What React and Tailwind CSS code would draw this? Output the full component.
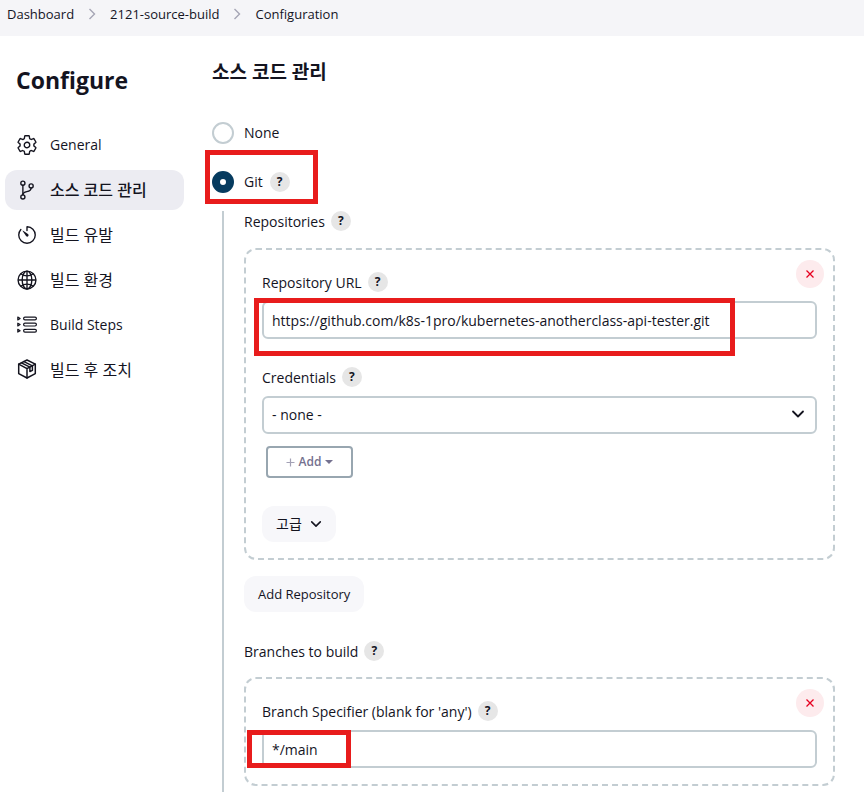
import React from "react";
import {
  IoSettingsOutline,
  IoGitBranchOutline,
  IoTimerOutline,
  IoGlobeOutline,
} from "react-icons/io5";

function StepsIcon({ className }) {
  return (
    <svg viewBox="-1 -1 22 22" fill="none" stroke="currentColor" strokeWidth="1.2" className={className} aria-hidden="true">
      {[3.5, 9.6, 15.7].map((y) => (
        <g key={y}>
          <path d={`M0.8 ${y - 1.4}v2.8l2.3 -1.4z`} strokeLinejoin="round" />
          <rect x="6.6" y={y - 1.4} width="12.8" height="2.8" rx="1.4" />
        </g>
      ))}
    </svg>
  );
}

function PackageIcon({ className }) {
  return (
    <svg
      viewBox="-1 0 22 22"
      fill="none"
      stroke="currentColor"
      strokeWidth="1.5"
      strokeLinejoin="round"
      strokeLinecap="round"
      className={className}
      aria-hidden="true"
    >
      <path d="M10 1L18.3 5.2V14.6L10 19L1.7 14.6V5.2Z" />
      <path d="M1.7 5.2L10 9.6L18.3 5.2M10 9.6V19" />
      <path d="M4.4 3.9L12.9 8.2V12.6L15.4 11.3V6.8L7 2.6" />
    </svg>
  );
}

function Chevron({ className }) {
  return (
    <svg
      viewBox="0 0 14 14"
      fill="none"
      stroke="currentColor"
      strokeWidth="1.8"
      strokeLinecap="round"
      strokeLinejoin="round"
      className={className}
      aria-hidden="true"
    >
      <path d="M2 4.5L7 9.5L12 4.5" />
    </svg>
  );
}

function Help({ topic }) {
  return (
    <button
      type="button"
      aria-label={`Help: ${topic}`}
      className="flex size-5 shrink-0 items-center justify-center rounded-full bg-[#e6e6e6] text-xs leading-5 font-bold"
    >
      ?
    </button>
  );
}

function FieldLabel({ htmlFor, children }) {
  return (
    <div className="flex h-5 items-center gap-1.5">
      <label htmlFor={htmlFor} className="pt-0.5">
        {children}
      </label>
      <Help topic={children} />
    </div>
  );
}

function Panel({ children, className }) {
  return (
    <div className={`relative rounded-xl border-2 border-dashed border-[#c3cdd2] px-4 ${className}`}>
      <button
        type="button"
        aria-label="Delete"
        className="absolute top-2.5 right-[9px] flex size-7 items-center justify-center rounded-full bg-[#fdebed] text-[#e6001f]"
      >
        <svg viewBox="0 0 8 8" stroke="currentColor" strokeWidth="1.3" className="size-2" aria-hidden="true">
          <path d="M0.5 0.5L7.5 7.5M7.5 0.5L0.5 7.5" />
        </svg>
      </button>
      {children}
    </div>
  );
}

const NAV = [
  { label: "General", Icon: IoSettingsOutline, size: "text-sm" },
  { label: "소스 코드 관리", Icon: IoGitBranchOutline, size: "text-base", active: true },
  { label: "빌드 유발", Icon: IoTimerOutline, size: "text-base" },
  { label: "빌드 환경", Icon: IoGlobeOutline, size: "text-base" },
  { label: "Build Steps", Icon: StepsIcon, size: "text-sm" },
  { label: "빌드 후 조치", Icon: PackageIcon, size: "text-base" },
];

const CRUMBS = ["Dashboard", "2121-source-build", "Configuration"];

const FIELD = "h-[38px] w-full rounded-md border-2 border-[#c3cdd2] bg-white px-2 outline-none";
const MARK = "pointer-events-none absolute border-[5px] border-[#e81c1c]";

export default function App() {
  return (
    <div className="flex min-h-screen flex-col bg-white font-['Open_Sans','Noto_Sans_CJK_KR',sans-serif] text-sm text-[#14141f]">
      <nav aria-label="Breadcrumb" className="h-9 bg-[#f5f5f8] px-[7px] pt-1">
        <ol className="flex items-center text-[13px] leading-5">
          {CRUMBS.map((crumb, i) => (
            <li key={crumb} className="flex items-center">
              {i > 0 && (
                <svg viewBox="0 0 8 12" fill="none" stroke="#a5a5b5" strokeWidth="1.4" className="mx-3.5 h-3 w-2" aria-hidden="true">
                  <path d="M1.5 1L6.5 6L1.5 11" />
                </svg>
              )}
              <a href="#">{crumb}</a>
            </li>
          ))}
        </ol>
      </nav>

      <div className="flex flex-1">
        <aside className="w-[184px] shrink-0 pl-[5px]">
          <h1 className="mt-7 mb-[29px] pl-[11px] text-[23px] leading-8 font-bold">Configure</h1>
          <ul className="flex flex-col gap-[5px]">
            {NAV.map(({ label, Icon, size, active }) => (
              <li key={label}>
                <a
                  href="#"
                  className={`flex h-10 items-center gap-3 rounded-xl px-[11px] ${size} ${active ? "bg-[#ececf2] font-medium" : ""}`}
                >
                  <Icon className="size-[22px] shrink-0" />
                  {label}
                </a>
              </li>
            ))}
          </ul>
        </aside>

        <main className="flex min-w-0 flex-1 flex-col pr-[29px] pl-7">
          <h2 className="mt-6 text-[19px] leading-6 font-bold">소스 코드 관리</h2>

          <div className="mt-[38px] flex h-[22px] items-center gap-[10px]">
            <input
              type="radio"
              name="scm"
              id="scm-none"
              className="size-[22px] appearance-none rounded-full border-2 border-[#c3cdd2]"
            />
            <label htmlFor="scm-none">None</label>
          </div>

          <div className="relative mt-[27px] flex h-[22px] items-center gap-[10px]">
            <input
              type="radio"
              name="scm"
              id="scm-git"
              defaultChecked
              className="size-[22px] appearance-none rounded-full border-8 border-[#063b5f] bg-white"
            />
            <div className="flex items-center gap-[7px]">
              <label htmlFor="scm-git">Git</label>
              <Help topic="Git" />
            </div>
            <span className={`${MARK} -top-[21px] -left-[7px] h-[54px] w-[113px]`} />
          </div>

          <section className="mt-[18px] ml-[10px] flex-1 border-l-2 border-[#c3cdd2] pl-5">
            <FieldLabel>Repositories</FieldLabel>

            <Panel className="mt-[17px] pt-[22px] pb-4">
              <FieldLabel htmlFor="repo-url">Repository URL</FieldLabel>
              <div className="relative mt-[9px]">
                <input
                  id="repo-url"
                  type="text"
                  defaultValue="https://github.com/k8s-1pro/kubernetes-anotherclass-api-tester.git"
                  className={FIELD}
                />
                <span className={`${MARK} -top-[3px] -left-2 h-[58px] w-[481px]`} />
              </div>

              <div className="mt-7">
                <FieldLabel htmlFor="credentials">Credentials</FieldLabel>
              </div>
              <div className="relative mt-[9px]">
                <select id="credentials" className={`${FIELD} appearance-none`}>
                  <option>- none -</option>
                </select>
                <Chevron className="pointer-events-none absolute top-[11px] right-3 size-3.5" />
              </div>

              <button
                type="button"
                className="mt-3 ml-1 flex h-8 w-[87px] items-center justify-center gap-1 rounded-sm border-2 border-[#98a6b0] text-xs font-semibold text-[#74718f]"
              >
                <svg viewBox="0 0 9 9" stroke="#a3a1b5" strokeWidth="1.2" className="size-[9px]" aria-hidden="true">
                  <path d="M4.5 0.5V8.5M0.5 4.5H8.5" />
                </svg>
                Add
                <svg viewBox="0 0 8 4" fill="currentColor" className="h-1 w-2" aria-hidden="true">
                  <path d="M0 0H8L4 4Z" />
                </svg>
              </button>

              <button type="button" className="mt-7 flex h-9 items-center gap-2 rounded-xl bg-[#f7f7fa] px-3.5 text-sm">
                고급
                <Chevron className="size-3" />
              </button>
            </Panel>

            <button type="button" className="mt-4 h-9 rounded-xl bg-[#f7f7fa] px-3.5 text-[13px]">
              Add Repository
            </button>

            <div className="mt-[29px]">
              <FieldLabel>Branches to build</FieldLabel>
            </div>

            <Panel className="mt-4 pt-[22px] pb-4">
              <FieldLabel htmlFor="branch">Branch Specifier (blank for 'any')</FieldLabel>
              <div className="relative mt-[9px]">
                <input id="branch" type="text" defaultValue="*/main" className={FIELD} />
                <span className={`${MARK} top-0 -left-[15px] h-[38px] w-[104px]`} />
              </div>
            </Panel>
          </section>
        </main>
      </div>
    </div>
  );
}
